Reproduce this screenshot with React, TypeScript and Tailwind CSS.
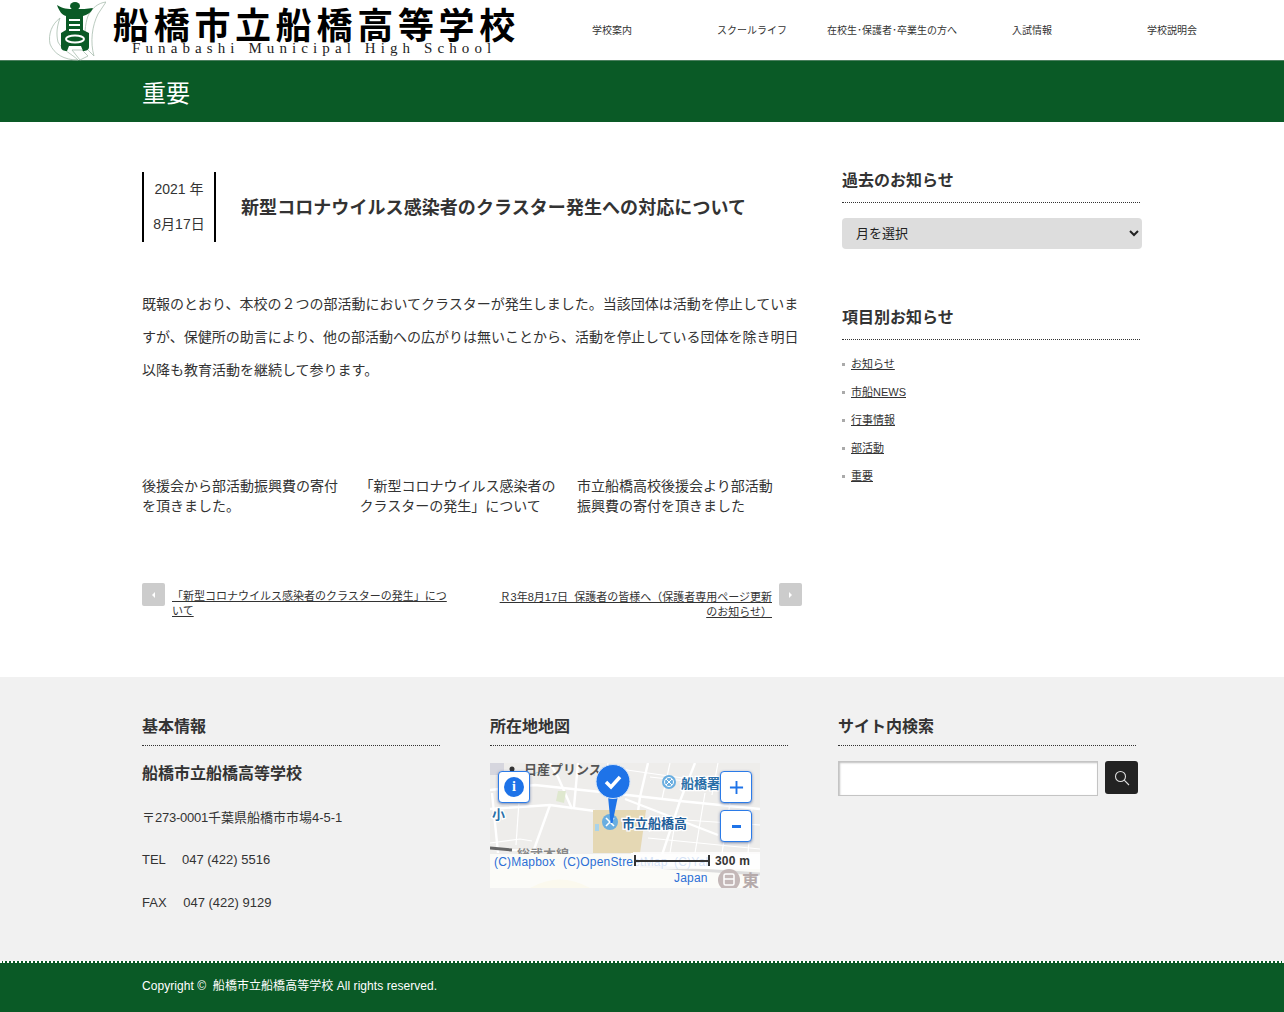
const font = "font-['Liberation_Sans','Noto_Sans_CJK_JP',sans-serif]";

const navItems = ["学校案内", "スクールライフ", "在校生･保護者･卒業生の方へ", "入試情報", "学校説明会"];
const categories = ["お知らせ", "市船NEWS", "行事情報", "部活動", "重要"];
const related = [
  "後援会から部活動振興費の寄付を頂きました。",
  "「新型コロナウイルス感染者のクラスターの発生」について",
  "市立船橋高校後援会より部活動振興費の寄付を頂きました",
];

function Emblem() {
  return (
    <svg viewBox="0 0 58 62" className="w-[58px] h-[62px] shrink-0">
      {/* outer swooshes */}
      <path d="M58 2 C50 3 44 8 40 16 C37 24 36 36 38 48 L46 56 C42 42 44 26 50 14 Z" fill="#fff" stroke="#a8bcae" strokeWidth="0.8" />
      <path d="M12 18 C4 24 0 34 2 44 C6 54 16 60 30 60 C24 54 14 50 10 42 C8 34 9 26 12 18 Z" fill="#fff" stroke="#a8bcae" strokeWidth="0.8" />
      <path d="M24 50 L32 60 L40 56 L34 50 Z" fill="#fff" stroke="#a8bcae" strokeWidth="0.8" />
      {/* green mark */}
      <ellipse cx="27" cy="6" rx="5" ry="4" fill="#0a5a26" />
      <path d="M9 5 C15 9 19 9 27 9 C34 9 39 9 45 8 C43 13 39 15 35 16 L35 30 L41 33 L41 47 C41 50 38 51 35 51 L33 46 L21 46 L19 51 C16 51 13 50 13 47 L13 33 L18 30 L18 16 C14 15 11 11 9 5 Z" fill="#0a5a26" />
      <path d="M21 19 H32 V21 H21 Z M21 24 H32 V26 H21 Z M21 29 H32 V31 H21 Z" fill="#fff" />
      <ellipse cx="27" cy="39" rx="9" ry="3.5" fill="none" stroke="#fff" strokeWidth="2" />
    </svg>
  );
}

function Header() {
  return (
    <header className="h-[60px] flex bg-white pl-[48px]">
      <div className="w-[494px] flex">
        <Emblem />
        <div className="pl-[7px] pt-[6px]">
          <div className="font-['Noto_Sans_CJK_JP',sans-serif] font-bold text-[36px] leading-[35px] tracking-[4.7px] text-black whitespace-nowrap">
            船橋市立船橋高等学校
          </div>
          <div className="font-['Liberation_Serif',serif] text-[15px] leading-[14px] tracking-[5.1px] text-[#222] whitespace-nowrap pl-[19px]">
            Funabashi Municipal High School
          </div>
        </div>
      </div>
      <nav className="flex">
        {navItems.map((item) => (
          <a key={item} className="w-[140px] h-[60px] flex items-center justify-center text-[10px] text-[#333] whitespace-nowrap">
            {item}
          </a>
        ))}
      </nav>
    </header>
  );
}

function Article() {
  return (
    <main className="w-[660px]">
      <div className="flex items-center">
        <div className="w-[74px] h-[70px] border-x-2 border-black flex flex-col items-center text-[14px] text-[#333]">
          <span className="leading-[35px]">2021 年</span>
          <span className="leading-[35px]">8月17日</span>
        </div>
        <h2 className="ml-[25px] mt-[2px] text-[18px] tracking-[0.07px] font-bold text-[#333]">新型コロナウイルス感染者のクラスター発生への対応について</h2>
      </div>
      <p className="mt-[46px] text-[14px] leading-[33px] text-[#333]">
        既報のとおり、本校の２つの部活動においてクラスターが発生しました。当該団体は活動を停止していますが、保健所の助言により、他の部活動への広がりは無いことから、活動を停止している団体を除き明日以降も教育活動を継続して参ります。
      </p>
      <div className="mt-[89px] flex gap-[19.5px]">
        {related.map((text) => (
          <p key={text} className="w-[198px] text-[14px] leading-[20px] text-[#333]">{text}</p>
        ))}
      </div>
      <div className="mt-[67px] flex justify-between">
        <a className="flex w-[310px]">
          <span className="w-[23px] h-[23px] bg-[#ccc] rounded-[2px] shrink-0 flex items-center justify-center">
            <span className="border-y-[3px] border-r-[3px] border-y-transparent border-r-white" />
          </span>
          <span className="ml-[7px] mt-[6px] text-[11px] leading-[15px] text-[#333] underline">
            「新型コロナウイルス感染者のクラスターの発生」について
          </span>
        </a>
        <a className="flex w-[303px] justify-end">
          <span className="mt-[7px] text-[11px] leading-[15px] text-[#333] underline text-right">
            Ｒ3年8月17日&nbsp; 保護者の皆様へ（保護者専用ページ更新のお知らせ）
          </span>
          <span className="ml-[7px] w-[23px] h-[23px] bg-[#ccc] rounded-[2px] shrink-0 flex items-center justify-center">
            <span className="border-y-[3px] border-l-[3px] border-y-transparent border-l-white" />
          </span>
        </a>
      </div>
    </main>
  );
}

function Sidebar() {
  return (
    <aside className="w-[300px] ml-[40px]">
      <h3 className="w-[298px] text-[16px] font-bold leading-[16px] text-[#333] pt-[1px] pb-[13px] border-b border-dotted border-[#333]">過去のお知らせ</h3>
      <select className={`mt-[15px] w-[300px] h-[31px] bg-[#ddd] rounded-[4px] pl-[10px] text-[13px] text-[#222] ${font}`}>
        <option>月を選択</option>
      </select>
      <h3 className="mt-[60px] w-[298px] text-[16px] font-bold leading-[16px] text-[#333] pt-[1px] pb-[13px] border-b border-dotted border-[#333]">項目別お知らせ</h3>
      <ul className="mt-[10px]">
        {categories.map((c) => (
          <li key={c} className="h-[28px] flex items-center">
            <span className="w-[3px] h-[3px] bg-[#aaa] mr-[6px]" />
            <a className="text-[11px] text-[#333] underline">{c}</a>
          </li>
        ))}
      </ul>
    </aside>
  );
}

function MapView() {
  const mainRoads = [
    "M0 27 L45 22 L120 30 L190 38 L270 46",
    "M60 0 L68 14 L82 46",
    "M88 0 L84 44",
    "M158 0 L150 34 L142 92",
    "M0 46 L60 42 L105 48",
    "M60 42 L42 92",
    "M205 0 L190 38 L172 92",
    "M135 36 L228 72",
    "M2 30 L8 90",
  ];
  const minorRoads = [
    "M30 24 L26 82", "M0 80 L30 76 L42 78", "M160 14 L250 24", "M165 55 L270 62", "M158 75 L270 86",
    "M215 30 L205 90", "M240 40 L232 90", "M185 60 L180 90", "M262 45 L258 90", "M118 0 L112 28", "M180 0 L172 36",
    "M228 0 L222 32", "M130 6 L200 16",
  ];
  return (
    <div className="relative w-[270px] h-[125px] overflow-hidden bg-[#eeedeb]">
      <svg viewBox="0 0 270 125" className="absolute inset-0 w-full h-full">
        <rect x="0" y="0" width="14" height="12" fill="#d6d6de" />
        {minorRoads.map((d) => (
          <path key={d} d={d} stroke="#fff" strokeWidth="1.2" fill="none" />
        ))}
        {mainRoads.map((d) => (
          <path key={d} d={d} stroke="#fff" strokeWidth="2.4" fill="none" />
        ))}
        <path d="M103 47 L156 47 L150 90 L103 90 Z" fill="#e5d8b4" />
        <rect x="105" y="61" width="4" height="7" fill="#a9d3ea" />
        <path d="M68 28 L76 28 L74 40 L66 38 Z" fill="#dfe8cf" />
        <path d="M44 11 Q50 7 56 11" stroke="#a8d8ea" strokeWidth="1" fill="none" />
        <path d="M0 85 L22 87" stroke="#666" strokeWidth="3" fill="none" />
        <path d="M22 87 L80 89" stroke="#fff" strokeWidth="2" fill="none" />
        <text x="27" y="96" fontSize="13" fontWeight="700" fill="#888">総武本線</text>
        <rect x="0" y="91" width="270" height="34" fill="#fbfbf8" />
        <path d="M40 125 Q70 108 100 125 Z" fill="#fbf9ee" />
        <path d="M150 103 L270 111" stroke="#ddd" strokeWidth="3" fill="none" />
        <circle cx="22" cy="6" r="2.5" fill="#333" />
        <text x="34" y="11" fontSize="13" fontWeight="700" fill="#555">日産プリンス</text>
        <circle cx="179" cy="19" r="7" fill="#6aaee0" />
        <circle cx="179" cy="19" r="4.5" fill="none" stroke="#fff" strokeWidth="1" />
        <path d="M176 16 L182 22 M182 16 L176 22" stroke="#fff" strokeWidth="1" />
        <text x="191" y="25" fontSize="13" fontWeight="700" fill="#2a6fa8" stroke="#fff" strokeWidth="2.5" paintOrder="stroke">船橋署</text>
        <text x="2" y="56" fontSize="13" fontWeight="700" fill="#2a6fa8" stroke="#fff" strokeWidth="2.5" paintOrder="stroke">小</text>
        <circle cx="120" cy="59" r="8" fill="#6aaee0" />
        <path d="M116 55 L124 63 M124 55 L116 63" stroke="#fff" strokeWidth="1.6" />
        <text x="132" y="65" fontSize="13" fontWeight="700" fill="#1f5e9a" stroke="#fff" strokeWidth="2.5" paintOrder="stroke">市立船橋高</text>
        <circle cx="239" cy="117" r="11" fill="#c4b8b8" />
        <rect x="234" y="111" width="10" height="11" rx="1.5" fill="none" stroke="#fff" strokeWidth="1.5" />
        <path d="M234 116 H244" stroke="#fff" strokeWidth="1.5" />
        <text x="252" y="124" fontSize="17" fontWeight="700" fill="#b5aaaa">東</text>
        {/* pin */}
        <path d="M118 33 L128 33 L122.5 60 L120.5 60 Z" fill="#1e73e8" />
        <circle cx="123" cy="18.5" r="17" fill="#1e73e8" stroke="#d5e5f8" strokeWidth="1" />
        <path d="M116 19 L121 24 L130 14" stroke="#fff" strokeWidth="3.5" fill="none" />
      </svg>
      <div className="absolute left-[4px] top-[92px] text-[12px] leading-[14px] tracking-[0.2px] text-[#2b6fd6] whitespace-nowrap">(C)Mapbox</div>
      <div className="absolute left-[73px] top-[92px] text-[12px] leading-[14px] tracking-[0.2px] text-[#2b6fd6] whitespace-nowrap">(C)OpenStreetMap</div>
      <div className="absolute left-[184px] top-[92px] w-[36px] overflow-hidden text-[12px] leading-[14px] tracking-[0.2px] text-[#2b6fd6] whitespace-nowrap">(C)Yahoo!</div>
      <div className="absolute left-[184px] top-[108px] text-[12px] leading-[14px] tracking-[0.2px] text-[#2b6fd6]">Japan</div>
      <div className="absolute left-[143px] top-[89px] w-[127px] h-[17px] bg-white/80 flex items-center">
        <span className="ml-[1px] w-[76px] h-[11px] border-x-2 border-[#333] flex items-center">
          <span className="w-full h-[2px] bg-[#333]" />
        </span>
        <span className="ml-[5px] text-[12px] font-bold tracking-[0.2px] text-[#333] whitespace-nowrap">300 m</span>
      </div>
      <button className="absolute left-[8px] top-[8px] w-[32px] h-[32px] bg-white rounded-[4px] border border-[#2b7be8] shadow-[0_1px_3px_rgba(0,40,120,0.5)] flex items-center justify-center">
        <span className="w-[20px] h-[20px] rounded-full bg-[#1e73e8] text-white text-[14px] leading-[20px] font-bold font-['Liberation_Serif',serif] text-center">i</span>
      </button>
      <button className="absolute left-[230px] top-[8px] w-[32px] h-[32px] bg-white rounded-[4px] border border-[#2b7be8] shadow-[0_1px_3px_rgba(0,40,120,0.5)] flex items-center justify-center">
        <svg viewBox="0 0 16 16" className="w-[15px] h-[15px]"><path d="M8 1 V15 M1 8 H15" stroke="#1e73e8" strokeWidth="2" /></svg>
      </button>
      <button className="absolute left-[230px] top-[47px] w-[32px] h-[32px] bg-white rounded-[4px] border border-[#2b7be8] shadow-[0_1px_3px_rgba(0,40,120,0.5)] flex items-center justify-center">
        <span className="w-[9px] h-[3px] bg-[#1e73e8]" />
      </button>
    </div>
  );
}

function FooterHeading({ children }: { children: string }) {
  return (
    <h3 className="w-[298px] text-[16px] font-bold leading-[20px] text-[#333] pb-[8px] border-b border-dotted border-[#333]">{children}</h3>
  );
}

export default function App() {
  return (
    <div className={`w-[1284px] bg-white ${font}`}>
      <Header />
      <div className="h-[62px] bg-[#0a5a26] border-t border-[#4c7f5f] pl-[142px] pt-[4px] flex items-center">
        <h1 className="text-[24px] text-white font-normal">重要</h1>
      </div>
      <div className="h-[555px] pt-[50px] pl-[142px] flex">
        <Article />
        <Sidebar />
      </div>
      <footer className="h-[284px] bg-[#f1f1f1] pt-[40px] pl-[142px] flex">
        <div className="w-[348px]">
          <FooterHeading>基本情報</FooterHeading>
          <h4 className="mt-[17px] text-[16px] font-bold leading-[22px] text-[#333]">船橋市立船橋高等学校</h4>
          <p className="mt-[23px] text-[13px] leading-[20px] text-[#333]">
            〒<span className="tracking-[-0.25px]">273-0001</span>千葉県船橋市市場4-5-1
          </p>
          <p className="mt-[22px] text-[13px] leading-[20px] text-[#333] whitespace-pre">TEL　 047 (422) 5516</p>
          <p className="mt-[23px] text-[13px] leading-[20px] text-[#333] whitespace-pre">FAX　 047 (422) 9129</p>
        </div>
        <div className="w-[348px]">
          <FooterHeading>所在地地図</FooterHeading>
          <div className="mt-[17px]"><MapView /></div>
        </div>
        <div>
          <FooterHeading>サイト内検索</FooterHeading>
          <div className="mt-[15px] flex items-start">
            <input className="w-[260px] h-[35px] bg-white border border-[#c4c4c4] shadow-[inset_1px_1px_2px_rgba(0,0,0,0.25)]" />
            <button className="ml-[7px] w-[33px] h-[33px] bg-[#222] rounded-[3px] flex items-center justify-center">
              <svg viewBox="0 0 16 16" className="w-[16px] h-[16px]">
                <circle cx="6.5" cy="6.5" r="5" fill="none" stroke="#ddd" strokeWidth="1.1" />
                <path d="M10.2 10.2 L15 15" stroke="#ddd" strokeWidth="1.1" />
              </svg>
            </button>
          </div>
        </div>
      </footer>
      <div className="h-[51px] bg-[#0a5a26] border-t-2 border-dotted border-white pl-[142px] pb-[3px] flex items-center">
        <p className="text-[12px] tracking-[0.05px] text-white">Copyright ©&nbsp; 船橋市立船橋高等学校 All rights reserved.</p>
      </div>
    </div>
  );
}
